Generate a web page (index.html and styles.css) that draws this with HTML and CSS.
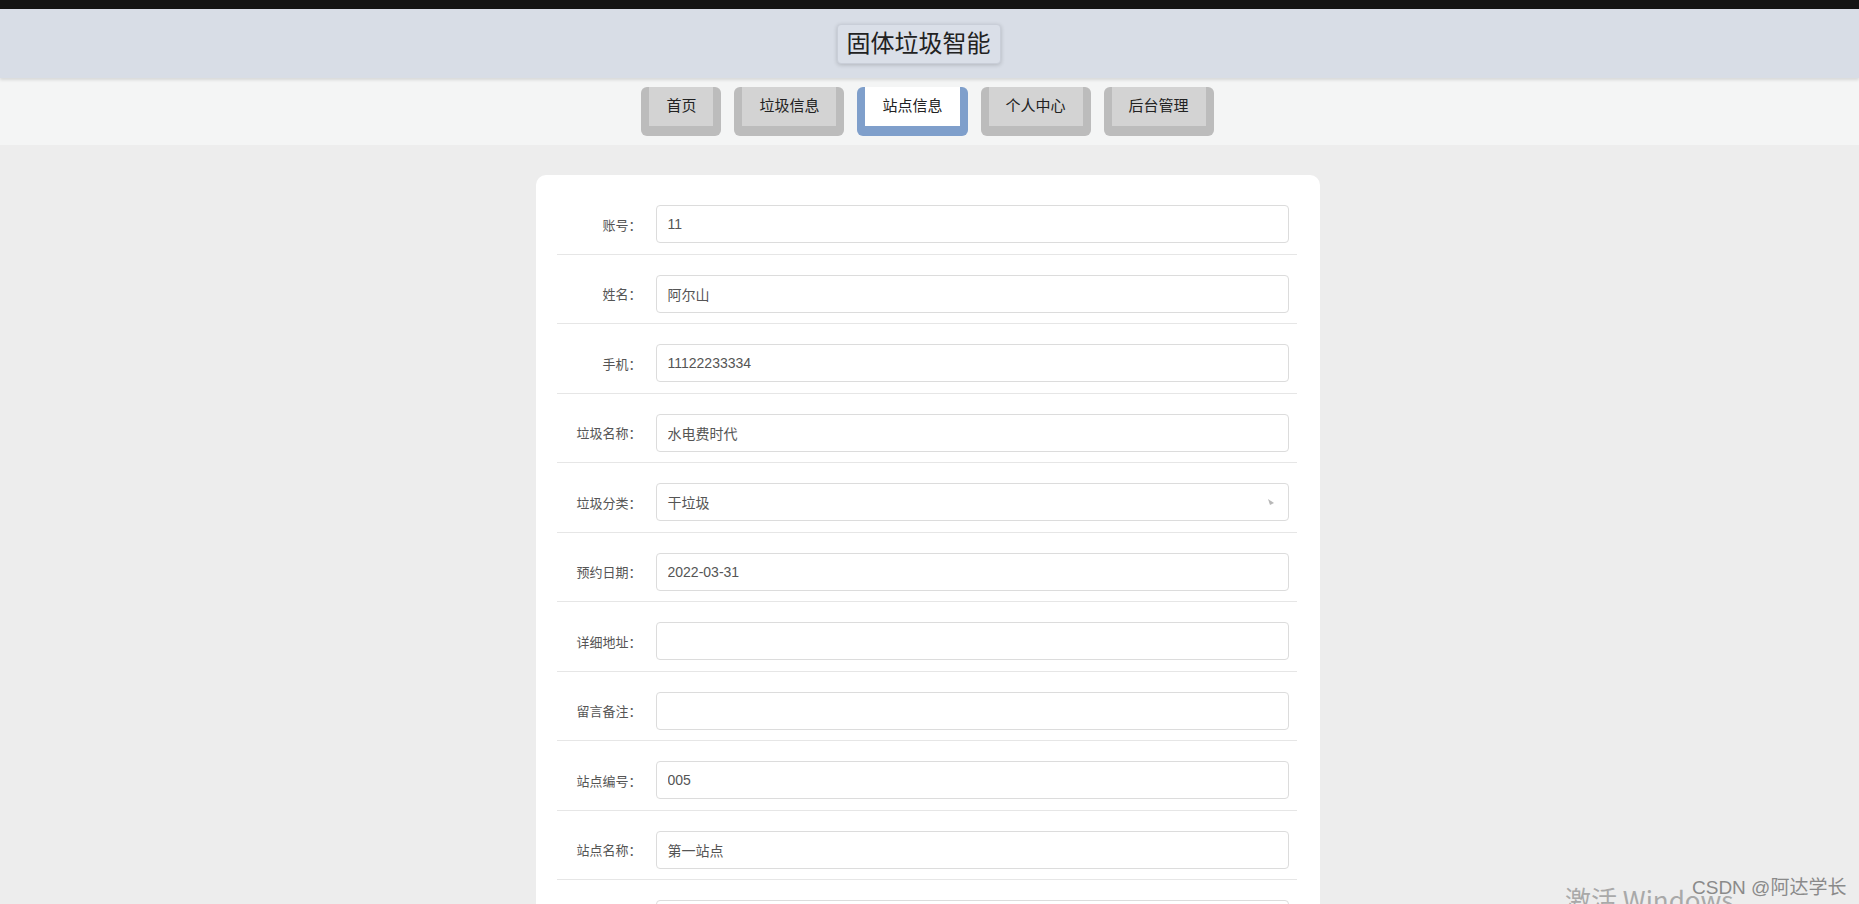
FILE: index.html
```html
<!DOCTYPE html>
<html>
<head>
    <title>固体垃圾智能</title>
    <link rel="stylesheet" href="styles.css">
</head>
<body>
    <div class="topbar"></div>
    <div class="header">
        <div class="title">固体垃圾智能</div>
    </div>
    <div class="nav">
        <a class="nav-btn"><span>首页</span></a>
        <a class="nav-btn"><span>垃圾信息</span></a>
        <a class="nav-btn active"><span>站点信息</span></a>
        <a class="nav-btn"><span>个人中心</span></a>
        <a class="nav-btn"><span>后台管理</span></a>
    </div>

    <div class="main">
        <form class="form-card">
            <div class="form-row">
                <label>账号：</label>
                <input class="form-input" type="text" value="11">
            </div>
            <div class="form-row">
                <label>姓名：</label>
                <input class="form-input" type="text" value="阿尔山">
            </div>
            <div class="form-row">
                <label>手机：</label>
                <input class="form-input" type="text" value="11122233334">
            </div>
            <div class="form-row">
                <label>垃圾名称：</label>
                <input class="form-input" type="text" value="水电费时代">
            </div>
            <div class="form-row">
                <label>垃圾分类：</label>
                <div class="form-input select">
                    <span>干垃圾</span>
                    <svg class="arrow" width="8" height="8" viewBox="0 0 8 8"><path d="M1 1 L7 5 L3 7 Z" fill="#b8b8b8"/></svg>
                </div>
            </div>
            <div class="form-row">
                <label>预约日期：</label>
                <input class="form-input" type="text" value="2022-03-31">
            </div>
            <div class="form-row">
                <label>详细地址：</label>
                <input class="form-input" type="text" value="">
            </div>
            <div class="form-row">
                <label>留言备注：</label>
                <input class="form-input" type="text" value="">
            </div>
            <div class="form-row">
                <label>站点编号：</label>
                <input class="form-input" type="text" value="005">
            </div>
            <div class="form-row">
                <label>站点名称：</label>
                <input class="form-input" type="text" value="第一站点">
            </div>
            <div class="form-row">
                <label>站点地址：</label>
                <input class="form-input" type="text" value="">
            </div>
            <div class="form-row">
                <label>审核回复：</label>
                <input class="form-input" type="text" value="">
            </div>
        </form>
    </div>

    <div class="watermark-win">激活 Windows</div>
    <div class="watermark-csdn">CSDN @阿达学长</div>
</body>
</html>
```

FILE: styles.css
```css
body {
    margin: 0;
    background-color: #ededed;
    font-family: "Liberation Sans", "Noto Sans CJK SC", sans-serif;
    color: #333;
    height: 904px;
    overflow: hidden;
}

.topbar {
    height: 9px;
    background-color: #141414;
}

.header {
    height: 69px;
    background-color: #d8dde6;
    display: flex;
    justify-content: center;
    align-items: center;
    box-shadow: 0 2px 3px rgba(0, 0, 0, 0.12);
    position: relative;
}

.title {
    margin-right: 22px;
    padding: 4px 9px;
    font-size: 24px;
    color: #222;
    border: 1px solid #c9ced8;
    border-radius: 4px;
    box-shadow: 0 1px 4px rgba(0, 0, 0, 0.18);
    background-color: #dadfe8;
    line-height: 30px;
}

.nav {
    height: 67px;
    background-color: #f4f5f5;
    display: flex;
    justify-content: center;
    align-items: flex-start;
    gap: 13px;
    padding: 9px 4px 0 0;
    box-sizing: border-box;
}

.nav-btn {
    display: block;
    background-color: #bcbcbc;
    border-radius: 6px;
    padding: 0 8px 10px;
    cursor: pointer;
}

.nav-btn span {
    display: block;
    padding: 0 17px;
    height: 39px;
    line-height: 37px;
    background-color: #d3d3d3;
    font-size: 15px;
    color: #222;
}

.nav-btn.active {
    background-color: #7f9fcb;
}

.nav-btn.active span {
    background-color: #fff;
}

.main {
    display: flex;
    justify-content: center;
    padding: 30px 4px 0 0;
}

.form-card {
    width: 784px;
    background-color: #fff;
    border-radius: 10px;
    padding: 10px 23px 0 21px;
    box-sizing: border-box;
}

.form-row {
    display: flex;
    align-items: center;
    padding: 20px 0 10.5px;
    border-bottom: 1px solid #e6e6e6;
}

.form-row label {
    width: 85px;
    padding-right: 14px;
    text-align: right;
    font-size: 13px;
    color: #555;
    flex-shrink: 0;
}

.form-input {
    width: 633px;
    height: 38px;
    box-sizing: border-box;
    border: 1px solid #dcdcdc;
    border-radius: 4px;
    padding: 0 11px;
    font-size: 14px;
    font-family: inherit;
    color: #555;
    outline: none;
    background-color: #fff;
}

.select {
    display: flex;
    align-items: center;
    justify-content: space-between;
}

.select .arrow {
    margin-right: 2px;
}

.watermark-win {
    position: absolute;
    left: 1565px;
    top: 880px;
    font-size: 26px;
    color: #a9a9a9;
    font-family: "Noto Sans CJK SC", sans-serif;
    white-space: nowrap;
}

.watermark-csdn {
    position: absolute;
    left: 1692px;
    top: 872px;
    font-size: 19px;
    color: #8a8a8a;
    font-family: "Liberation Sans", "Noto Sans CJK SC", sans-serif;
    white-space: nowrap;
}
```
